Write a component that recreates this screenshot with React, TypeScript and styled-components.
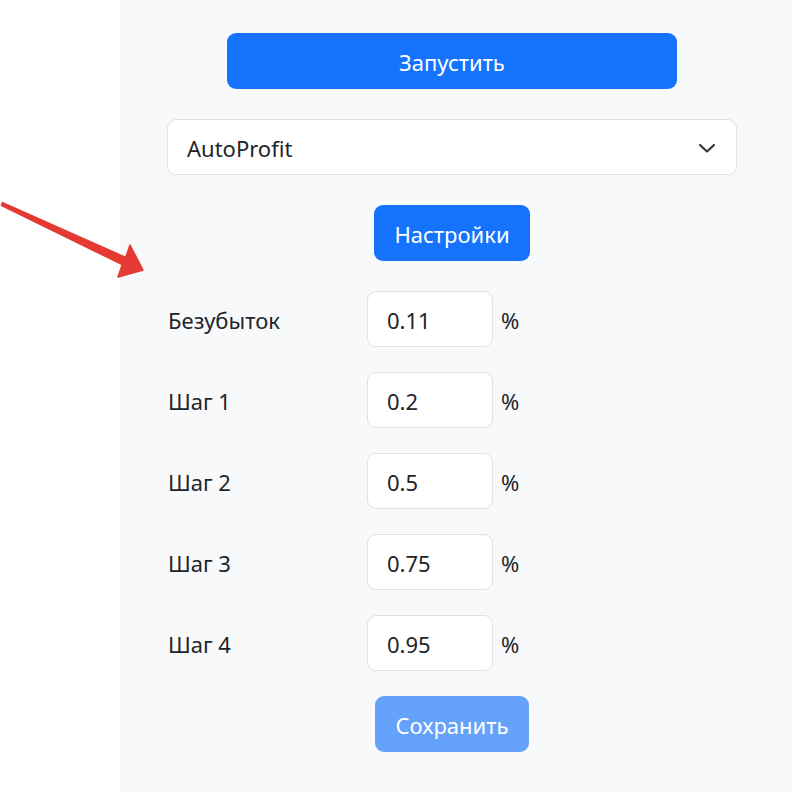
import React from "react";
import styled, { createGlobalStyle } from "styled-components";

const Global = createGlobalStyle`
  html, body { margin: 0; padding: 0; background: #ffffff; }
  body { font-family: "Noto Sans", "Open Sans", sans-serif; color: #212529; }
  * { box-sizing: border-box; }
`;

const Page = styled.div`
  position: relative;
  display: flex;
  width: 792px;
  height: 792px;
  overflow: hidden;
`;

const LeftGap = styled.div`
  width: 120px;
  flex: none;
  background: #ffffff;
`;

const Panel = styled.div`
  flex: 1;
  background: #f8f9fa;
  padding: 33px 0 0 47px;
`;

const Column = styled.div`
  width: 570px;
  display: flex;
  flex-direction: column;
  align-items: center;
`;

const Button = styled.button<{ $width: number; $faded?: boolean; $mt: number }>`
  width: ${(p) => p.$width}px;
  height: 56px;
  margin-top: ${(p) => p.$mt}px;
  border: none;
  border-radius: 9px;
  background: ${(p) => (p.$faded ? "#65a2fb" : "#1573fd")};
  color: #ffffff;
  font-family: inherit;
  font-size: 22px;
  padding: 2px 0 0;
  line-height: 1;
`;

const Select = styled.div`
  margin-top: 30px;
  width: 570px;
  height: 56px;
  background: #ffffff;
  border: 1px solid #dee2e6;
  border-radius: 9px;
  display: flex;
  align-items: center;
  justify-content: space-between;
  padding: 1px 20px 0 19px;
  font-size: 22px;
`;

const Rows = styled.div`
  margin-top: 30px;
  width: 100%;
  display: flex;
  flex-direction: column;
  gap: 25px;
`;

const Row = styled.div`
  display: flex;
  align-items: center;
  height: 56px;
`;

const Label = styled.div`
  width: 200px;
  padding: 2px 0 0 1px;
  font-size: 22px;
`;

const Input = styled.div`
  width: 126px;
  height: 56px;
  background: #ffffff;
  border: 1px solid #dee2e6;
  border-radius: 9px;
  display: flex;
  align-items: center;
  padding: 2px 0 0 19px;
  font-size: 22px;
`;

const Unit = styled.div`
  margin-left: 8px;
  padding-top: 2px;
  font-size: 22px;
`;

const ArrowSvg = styled.svg`
  position: absolute;
  left: 0;
  top: 0;
`;

const rows = [
  ["Безубыток", "0.11"],
  ["Шаг 1", "0.2"],
  ["Шаг 2", "0.5"],
  ["Шаг 3", "0.75"],
  ["Шаг 4", "0.95"],
];

export default function App() {
  return (
    <Page>
      <Global />
      <LeftGap />
      <Panel>
        <Column>
          <Button $width={450} $mt={0}>Запустить</Button>
          <Select>
            <span>AutoProfit</span>
            <svg width="18" height="12" viewBox="0 0 18 12">
              <path d="M2 3 L9 9.5 L16 3" fill="none" stroke="#343a40" strokeWidth="2.2" strokeLinecap="round" strokeLinejoin="round" />
            </svg>
          </Select>
          <Button $width={156} $mt={30}>Настройки</Button>
          <Rows>
            {rows.map(([l, v]) => (
              <Row key={l}>
                <Label>{l}</Label>
                <Input>{v}</Input>
                <Unit>%</Unit>
              </Row>
            ))}
          </Rows>
          <Button $width={154} $mt={25} $faded>Сохранить</Button>
        </Column>
      </Panel>
      <ArrowSvg width="160" height="300" viewBox="0 0 160 300">
        <polygon
          points="2.6,203.6 125.7,258.4 130,246 143,271 118,278 122.3,265.6 1.4,206.4"
          fill="#b0b0b0"
          opacity="0.5"
        />
        <polygon
          points="2.6,202.6 125.7,257.4 130,245 143,270 118,277 122.3,264.6 1.4,205.4"
          fill="#e53a33"
          stroke="#e53a33"
          strokeWidth="1.5"
          strokeLinejoin="round"
        />
      </ArrowSvg>
    </Page>
  );
}
